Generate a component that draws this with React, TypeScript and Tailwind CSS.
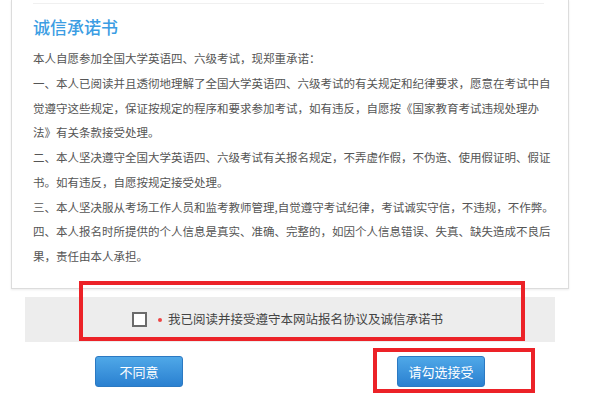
export default function App() {
  const lines = [
    "本人自愿参加全国大学英语四、六级考试，现郑重承诺：",
    "一、本人已阅读并且透彻地理解了全国大学英语四、六级考试的有关规定和纪律要求，愿意在考试中自",
    "觉遵守这些规定，保证按规定的程序和要求参加考试，如有违反，自愿按《国家教育考试违规处理办",
    "法》有关条款接受处理。",
    "二、本人坚决遵守全国大学英语四、六级考试有关报名规定，不弄虚作假，不伪造、使用假证明、假证",
    "书。如有违反，自愿按规定接受处理。",
    "三、本人坚决服从考场工作人员和监考教师管理,自觉遵守考试纪律，考试诚实守信，不违规，不作弊。",
    "四、本人报名时所提供的个人信息是真实、准确、完整的，如因个人信息错误、失真、缺失造成不良后",
    "果，责任由本人承担。",
  ];

  return (
    <div
      className="relative w-[600px] h-[400px] bg-white overflow-hidden"
      style={{ fontFamily: '"Noto Sans CJK SC", "Noto Sans", sans-serif' }}
    >
      {/* agreement card */}
      <div className="ml-[11px] w-[558px] h-[289px] border border-t-0 border-[#dcdcdc] shadow-[0_1px_2px_rgba(0,0,0,0.08)] bg-white">
        <div className="mx-[21px] pt-[3px]">
          <div className="border-t border-[#f0f0f0] w-[511px]" />
          <h1 className="mt-[11px] text-[17px] leading-[24px] font-medium text-[#3b9de3]">诚信承诺书</h1>
          <div className="mt-[7px] text-[11.5px] leading-[24.75px] text-[#555]">
            {lines.map((l) => (
              <div key={l} className="whitespace-nowrap">
                {l}
              </div>
            ))}
          </div>
        </div>
      </div>

      {/* checkbox band */}
      <div className="mt-[8px] ml-[25px] w-[530px] h-[45px] bg-[#ededed] flex items-center pl-[107px]">
        <span className="w-[15px] h-[15px] border-2 border-[#6b6b6b] bg-white" />
        <span className="ml-[11px] w-[4px] h-[4px] rounded-full bg-[#ee4444]" />
        <span className="ml-[6px] text-[12.5px] text-[#444]">我已阅读并接受遵守本网站报名协议及诚信承诺书</span>
      </div>

      {/* buttons */}
      <div className="mt-[14px] flex">
        <button className="ml-[95px] w-[88px] h-[31px] rounded-[3px] border border-[#2b79c2] bg-gradient-to-b from-[#4fa8e8] to-[#2a80d0] text-white text-[13px]">
          不同意
        </button>
        <button className="ml-[214px] w-[88px] h-[31px] rounded-[3px] border border-[#2b79c2] bg-gradient-to-b from-[#4fa8e8] to-[#2a80d0] text-white text-[13px]">
          请勾选接受
        </button>
      </div>

      {/* red annotation boxes */}
      <div className="absolute left-[79px] top-[281px] w-[446px] h-[60px] border-4 border-[#ec2228]" />
      <div className="absolute left-[373px] top-[348px] w-[162px] h-[45px] border-4 border-[#ec2228]" />
    </div>
  );
}
